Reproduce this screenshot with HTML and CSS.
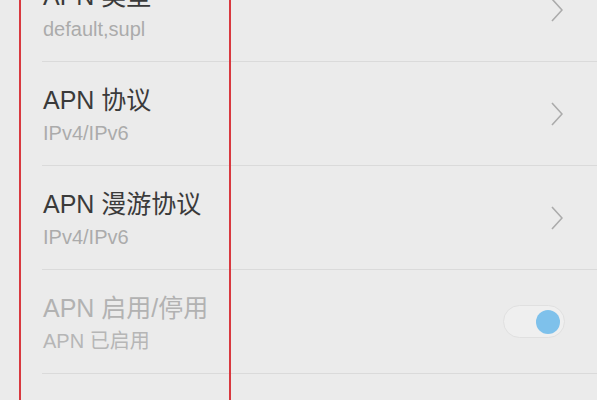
FILE: index.html
```html
<!DOCTYPE html>
<html lang="zh-CN">
<head>
<meta charset="utf-8">
<title>APN 设置</title>
<link rel="stylesheet" href="styles.css">
</head>
<body>
<div class="screen">
  <div class="list">
    <div class="row">
      <div class="text">
        <div class="title">APN 类型</div>
        <div class="sub">default,supl</div>
      </div>
      <svg class="chev" width="12" height="24" viewBox="0 0 12 24"><polyline points="1,1 11,12 1,23" fill="none" stroke="#ababab" stroke-width="1.6"/></svg>
    </div>
    <div class="row">
      <div class="text">
        <div class="title">APN 协议</div>
        <div class="sub">IPv4/IPv6</div>
      </div>
      <svg class="chev" width="12" height="24" viewBox="0 0 12 24"><polyline points="1,1 11,12 1,23" fill="none" stroke="#ababab" stroke-width="1.6"/></svg>
    </div>
    <div class="row">
      <div class="text">
        <div class="title">APN 漫游协议</div>
        <div class="sub">IPv4/IPv6</div>
      </div>
      <svg class="chev" width="12" height="24" viewBox="0 0 12 24"><polyline points="1,1 11,12 1,23" fill="none" stroke="#ababab" stroke-width="1.6"/></svg>
    </div>
    <div class="row disabled">
      <div class="text">
        <div class="title">APN 启用/停用</div>
        <div class="sub">APN 已启用</div>
      </div>
      <div class="toggle"><div class="knob"></div></div>
    </div>
    <div class="row"></div>
  </div>
  <div class="mark"></div>
</div>
</body>
</html>
```
FILE: styles.css
```css
html, body {
  margin: 0;
  padding: 0;
  background: #ffffff;
}
.screen {
  position: relative;
  width: 597px;
  height: 400px;
  overflow: hidden;
  background: #ebebeb;
  font-family: "Liberation Sans", "Noto Sans CJK SC", sans-serif;
}
.list {
  margin-top: -42px;
}
.row {
  margin-left: 42px;
  padding-right: 34px;
  height: 103px;
  border-bottom: 1px solid #dadada;
  display: flex;
  align-items: center;
  justify-content: space-between;
}
.text {
  align-self: flex-start;
  padding-top: 23px;
  padding-left: 1px;
}
.title {
  font-size: 25px;
  line-height: 30px;
  color: #3a3a3a;
  white-space: nowrap;
}
.sub {
  margin-top: 6px;
  font-size: 20px;
  line-height: 24px;
  color: #ababab;
  white-space: nowrap;
}
.disabled .title {
  color: #b2b2b2;
}
.disabled .sub {
  color: #b6b6b6;
}
.chev {
  display: block;
}
.toggle {
  margin-right: -2px;
  width: 62px;
  height: 33px;
  box-sizing: border-box;
  border: 1px solid #e0e0e0;
  border-radius: 17px;
  background: #efefef;
  display: flex;
  align-items: center;
  justify-content: flex-end;
  padding-right: 4px;
}
.knob {
  width: 24px;
  height: 24px;
  border-radius: 50%;
  background: #7ec1eb;
}
.mark {
  position: absolute;
  left: 19px;
  top: -10px;
  width: 212px;
  height: 430px;
  box-sizing: border-box;
  border: 2px solid #d8383f;
}
```
